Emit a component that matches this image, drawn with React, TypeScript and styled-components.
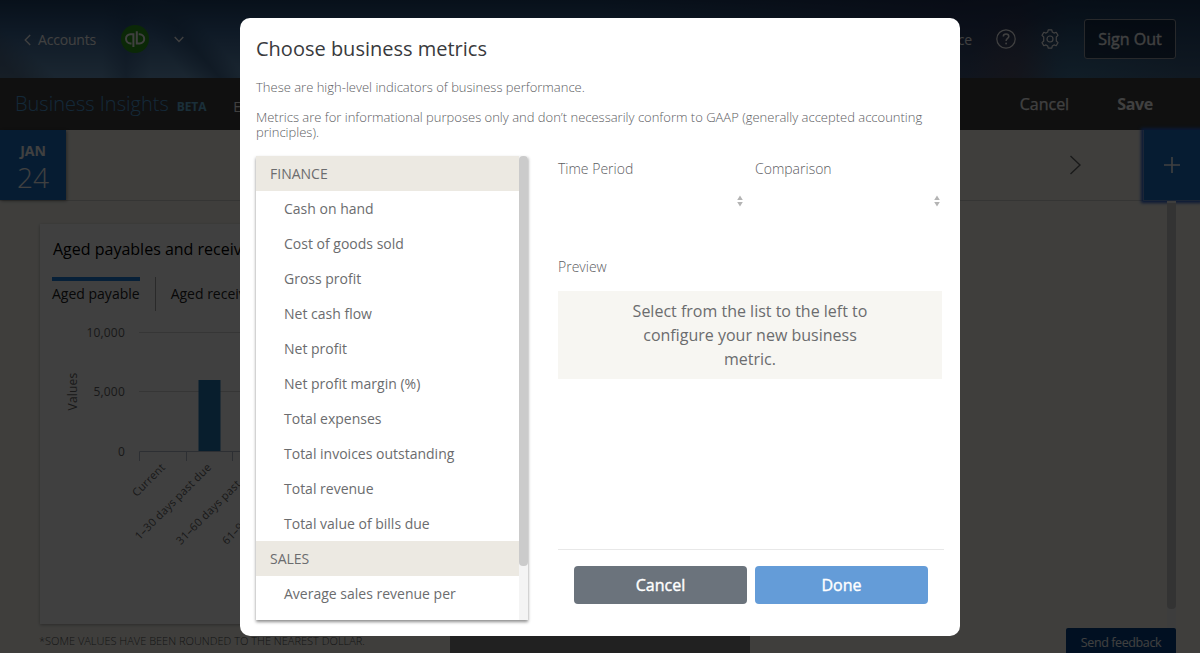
import React from 'react';
import styled, { createGlobalStyle } from 'styled-components';

const GlobalStyle = createGlobalStyle`
  * { box-sizing: border-box; }
  html, body { margin: 0; padding: 0; overflow: hidden; }
  body {
    font-family: 'Open Sans', 'Noto Sans', sans-serif;
    color: #6b6c6e;
    background: #f9f7f0;
  }
  button { font-family: inherit; cursor: pointer; }
  p, h1, h2, ul { margin: 0; padding: 0; }
`;

/* ---------- Page ---------- */

const Page = styled.div`
  width: 1200px;
  height: 653px;
  overflow: hidden;
  display: flex;
  flex-direction: column;
`;

const TopBar = styled.header`
  height: 78px;
  flex: none;
  display: flex;
  align-items: center;
  justify-content: space-between;
  padding: 0 24px;
  color: #fff;
  background:
    linear-gradient(42deg, rgba(70, 88, 110, 0.5) 1.5%, transparent 4.5%),
    linear-gradient(50deg, transparent 14.8%, rgba(40, 76, 116, 0.55) 17.4%, transparent 19.5%),
    linear-gradient(90deg, transparent 8.5%, rgba(30, 66, 110, 0.35) 10.5%, transparent 12.5%),
    radial-gradient(46px 70px at 1012px 78px, rgba(120, 70, 75, 0.35), transparent),
    radial-gradient(110px 60px at 1075px 78px, rgba(70, 140, 180, 0.4), transparent),
    linear-gradient(90deg, transparent 50%, rgba(36, 40, 74, 0.6) 80%, rgba(40, 48, 80, 0.7) 85%, rgba(24, 52, 82, 0.5) 89%, rgba(24, 48, 78, 0.5) 100%),
    linear-gradient(180deg, #20426a 0%, #3c6898 42%, #6c9ac4 100%);
`;

const Cluster = styled.div<{ $gap: number }>`
  display: flex;
  align-items: center;
  gap: ${(p) => p.$gap}px;
`;

const NavLink = styled.a`
  display: flex;
  align-items: center;
  gap: 7px;
  font-size: 14px;
  line-height: 20px;
  letter-spacing: -0.2px;
  padding-top: 1px;
`;

const SignOut = styled.button`
  width: 92px;
  height: 40px;
  padding: 0 0 1px;
  color: #fff;
  font-size: 16px;
  font-weight: 500;
  -webkit-text-stroke: 0.35px currentColor;
  background: rgba(16, 32, 56, 0.65);
  border: 1px solid #a0a4ac;
  border-radius: 3px;
`;

const ToolBar = styled.div`
  height: 52px;
  flex: none;
  display: flex;
  align-items: center;
  padding: 0 47px 0 15px;
  background: #404040;
  color: #fff;
`;

const ProductName = styled.h1`
  font-size: 20px;
  font-weight: 300;
  line-height: 28px;
  color: #50a4e0;
`;

const Beta = styled.span`
  margin-left: 8px;
  padding-top: 5px;
  font-size: 12px;
  font-weight: 700;
  letter-spacing: -0.1px;
  color: #68bce4;
`;

const MenuItem = styled.span`
  margin-left: 27px;
  padding-top: 5px;
  font-size: 14px;
  white-space: nowrap;
`;

const ToolActions = styled.div`
  margin-left: auto;
  display: flex;
  gap: 48px;
  font-size: 16px;
  font-weight: 500;
  -webkit-text-stroke: 0.25px currentColor;
`;

const Strong = styled.span`
  font-weight: 700;
  letter-spacing: -0.3px;
  -webkit-text-stroke: 0;
`;

const MetricStrip = styled.div`
  height: 71px;
  flex: none;
  display: flex;
  justify-content: space-between;
  border-bottom: 1px solid #d4d3cd;
`;

const DateTile = styled.div`
  width: 66px;
  height: 70px;
  padding-top: 11px;
  text-align: center;
  color: #fff;
  background: #1870c8;
  box-shadow: 1px 1px 3px rgba(0, 0, 0, 0.4);
`;

const Month = styled.div`
  font-size: 14px;
  font-weight: 700;
  line-height: 20px;
`;

const Day = styled.div`
  font-size: 28px;
  font-weight: 300;
  line-height: 32px;
`;

const StripEnd = styled.div`
  display: flex;
  align-items: center;
  gap: 61px;
`;

const AddTile = styled.div`
  width: 57px;
  height: 71px;
  display: flex;
  align-items: center;
  justify-content: center;
  background: #1870c8;
  border-left: 1px solid #6d96d8;
  border-bottom: 1px solid #6d96d8;
  box-shadow: 0 0 3px 2px #2860d0;
`;

const Content = styled.main`
  flex: 1;
  min-height: 0;
  display: flex;
  justify-content: space-between;
  padding: 0 24px 0 40px;
`;

const CardColumn = styled.div`
  width: 410px;
  padding-top: 23px;
`;

const Card = styled.section`
  height: 400px;
  padding: 14px 12px;
  background: #fff;
  box-shadow: 0 1px 3px rgba(0, 0, 0, 0.3);
`;

const CardTitle = styled.h2`
  font-size: 16px;
  font-weight: 400;
  line-height: 22px;
  padding-left: 1px;
  color: #000;
`;

const Tabs = styled.div`
  display: flex;
  margin-top: 17px;
`;

const Tab = styled.div<{ $active?: boolean }>`
  height: 34px;
  padding-top: 3px;
  border-top: 4px solid ${(p) => (p.$active ? '#1c80e0' : 'transparent')};
  font-size: 14px;
  line-height: 19px;
  color: #222;
`;

const TabDivider = styled.div`
  width: 1px;
  height: 34px;
  margin: 0 15px;
  background: #a8a8a8;
`;

const ChartSvg = styled.svg`
  display: block;
  margin-left: -12px;
  font-size: 12px;
  letter-spacing: 0.2px;
`;

const Categories = styled.g`
  font-size: 11px;
  letter-spacing: 0.25px;
`;

const RoundingNote = styled.p`
  margin: 9px 0 0 -1px;
  font-size: 11px;
  line-height: 16px;
  font-weight: 300;
  white-space: nowrap;
  color: #555;
`;

const DockedPanel = styled.div`
  align-self: flex-end;
  width: 300px;
  height: 20px;
  margin-right: auto;
  background: #848484;
`;

const SideRail = styled.div`
  width: 110px;
  display: flex;
  flex-direction: column;
  justify-content: space-between;
`;

const PageTrack = styled.div`
  align-self: flex-end;
  width: 9px;
  height: 427px;
  padding-top: 2px;
  background: #f4f4f4;
`;

const PageThumb = styled.div`
  height: 406px;
  border-radius: 0 0 4px 4px;
  background: #cacaca;
`;

const Feedback = styled.button`
  height: 25px;
  flex: none;
  padding: 3px 0 0;
  border: 0;
  border-radius: 2px 2px 0 0;
  background: #064288;
  color: #fff;
  font-size: 12.5px;
  letter-spacing: -0.4px;
`;

/* ---------- Dialog ---------- */

const Overlay = styled.div`
  position: fixed;
  inset: 0;
  display: flex;
  justify-content: center;
  align-items: flex-start;
  padding-top: 18px;
  background: rgba(0, 0, 0, 0.75);
`;

const Dialog = styled.div`
  width: 720px;
  height: 618px;
  padding: 17px 16px 16px;
  display: flex;
  flex-direction: column;
  background: #fff;
  border-radius: 10px;
`;

const DialogTitle = styled.h2`
  font-size: 20px;
  line-height: 27px;
  font-weight: 400;
  color: #393a3d;
`;

const Intro = styled.p<{ $top: number }>`
  margin-top: ${(p) => p.$top}px;
  font-size: 13px;
  line-height: 15px;
  font-weight: 300;
  color: #5c5d5f;
`;

const DialogBody = styled.div`
  display: flex;
  gap: 30px;
  margin-top: 16px;
`;

const ListPane = styled.div`
  width: 272px;
  height: 464px;
  display: flex;
  overflow: hidden;
  box-shadow: 0 2px 3px rgba(0, 0, 0, 0.45);
`;

const List = styled.ul`
  flex: 1;
  list-style: none;
`;

const GroupRow = styled.li`
  height: 35px;
  padding-left: 14px;
  font-size: 14px;
  line-height: 35px;
  background: #ece9e2;
`;

const MetricRow = styled.li`
  height: 35px;
  padding-left: 28px;
  font-size: 14px;
  line-height: 35px;
  white-space: nowrap;
`;

const ListTrack = styled.div`
  width: 9px;
  background: #f4f4f4;
`;

const ListThumb = styled.div`
  height: 410px;
  border-radius: 4px;
  background: #cbcbcb;
`;

const Settings = styled.div`
  width: 386px;
  display: flex;
  flex-direction: column;
`;

const Fields = styled.div`
  display: grid;
  grid-template-columns: 197px 189px;
  height: 98px;
`;

const Label = styled.div`
  font-size: 14px;
  font-weight: 300;
  line-height: 20px;
  padding-top: 3px;
  color: #5c5d5f;
`;

const Picker = styled.div`
  width: 189px;
  height: 40px;
  margin-top: 2px;
  padding-right: 4px;
  display: flex;
  align-items: center;
  justify-content: flex-end;
`;

const Preview = styled.div`
  width: 384px;
  height: 88px;
  margin-top: 14px;
  padding: 8px 64px;
  text-align: center;
  font-size: 16px;
  line-height: 24px;
  background: #f7f6f2;
`;

const Actions = styled.div`
  display: flex;
  gap: 8px;
  margin-top: auto;
  height: 71px;
  padding: 16px 16px 0;
  border-top: 1px solid #e8e8e8;
`;

const ActionButton = styled.button<{ $color: string }>`
  width: 173px;
  height: 38px;
  padding: 0;
  border: 0;
  border-radius: 4px;
  font-size: 16px;
  font-weight: 500;
  -webkit-text-stroke: 0.4px currentColor;
  color: #fff;
  background: ${(p) => p.$color};
`;

const FINANCE = [
  'Cash on hand',
  'Cost of goods sold',
  'Gross profit',
  'Net cash flow',
  'Net profit',
  'Net profit margin (%)',
  'Total expenses',
  'Total invoices outstanding',
  'Total revenue',
  'Total value of bills due',
];

const SALES = ['Average sales revenue per'];

function SortArrows() {
  return (
    <svg width="6" height="12" viewBox="0 0 6 12" fill="#b4b4b4">
      <path d="M3 .5 5.8 5H.2zM3 11.5.2 7h5.6z" />
    </svg>
  );
}

function Logo() {
  return (
    <svg width="28" height="28" viewBox="0 0 28 28" fill="none">
      <circle cx="14" cy="14" r="14" fill="#2ca01c" />
      <g stroke="#fff" strokeWidth="2">
        <path d="M12.4 22V9.2H9.6a4.6 4.6 0 0 0 0 9.2h.9" />
        <path d="M15.8 6.3v12.2h2.8a4.6 4.6 0 0 0 0-9.2h-.9" />
      </g>
    </svg>
  );
}

function HelpIcon() {
  return (
    <svg width="20" height="20" viewBox="0 0 20 20" fill="none" stroke="#fff" strokeWidth="1.2">
      <circle cx="10" cy="10" r="9.2" />
      <path d="M7.3 7.6c0-1.6 1.2-2.5 2.8-2.5s2.7 1 2.7 2.4c0 1.9-2.7 2-2.7 4.4" strokeWidth="1.5" />
      <circle cx="10.1" cy="14.5" r=".9" fill="#fff" stroke="none" />
    </svg>
  );
}

function GearIcon() {
  return (
    <svg width="20" height="20" viewBox="0 0 20 20" fill="none" stroke="#fff" strokeWidth="1.2" strokeLinejoin="round">
      <circle cx="10" cy="10" r="3" />
      <path d="M8.2.8h3.6l.5 2.3 1.7 1 2.2-.8 1.8 3.1L16.300 8v4l1.700 1.600-1.800 3.100-2.200-.8-1.700 1-.5 2.300H8.200l-.5-2.300-1.700-1-2.200.8L2 13.600 3.700 12V8L2 6.400l1.800-3.100 2.200.8 1.700-1z" />
    </svg>
  );
}

function AgingChart() {
  return (
    <ChartSvg width="300" height="250" viewBox="40 311 300 250" fill="#666">
      <path d="M139 332.5H340M139 391.5H340" stroke="#d8d8d8" />
      <path d="M139.5 461V451.5H240M186.5 451v10M232.5 451v10" fill="none" stroke="#b4bccb" />
      <rect x="198.5" y="380" width="22" height="71" fill="#2378b4" />
      <g textAnchor="end">
        <text x="125" y="337">10,000</text>
        <text x="125" y="396">5,000</text>
        <text x="125" y="456">0</text>
      </g>
      <Categories textAnchor="end">
        <text transform="translate(166 468) rotate(-45)">Current</text>
        <text transform="translate(212 468) rotate(-45)">1–30 days past due</text>
        <text transform="translate(258 468) rotate(-45)">31–60 days past due</text>
        <text transform="translate(304 468) rotate(-45)">61–90 days past due</text>
      </Categories>
      <text textAnchor="middle" transform="translate(77 391.5) rotate(-90)">Values</text>
    </ChartSvg>
  );
}

function MetricsDialog() {
  return (
    <Overlay>
      <Dialog role="dialog" aria-modal="true">
        <DialogTitle>Choose business metrics</DialogTitle>
        <Intro $top={18}>These are high-level indicators of business performance.</Intro>
        <Intro $top={15}>
          Metrics are for informational purposes only and don’t necessarily conform to GAAP (generally accepted
          accounting principles).
        </Intro>
        <DialogBody>
          <ListPane>
            <List>
              <GroupRow>FINANCE</GroupRow>
              {FINANCE.map((name) => (
                <MetricRow key={name}>{name}</MetricRow>
              ))}
              <GroupRow>SALES</GroupRow>
              {SALES.map((name) => (
                <MetricRow key={name}>{name}</MetricRow>
              ))}
            </List>
            <ListTrack>
              <ListThumb />
            </ListTrack>
          </ListPane>
          <Settings>
            <Fields>
              {['Time Period', 'Comparison'].map((name) => (
                <div key={name}>
                  <Label>{name}</Label>
                  <Picker>
                    <SortArrows />
                  </Picker>
                </div>
              ))}
            </Fields>
            <Label>Preview</Label>
            <Preview>Select from the list to the left to configure your new business metric.</Preview>
            <Actions>
              <ActionButton $color="#6b737c">Cancel</ActionButton>
              <ActionButton $color="#649cd8">Done</ActionButton>
            </Actions>
          </Settings>
        </DialogBody>
      </Dialog>
    </Overlay>
  );
}

export default function App() {
  return (
    <>
      <GlobalStyle />
      <Page>
        <TopBar>
          <Cluster $gap={25}>
            <NavLink>
              <svg width="7" height="12" viewBox="0 0 7 12" fill="none" stroke="#fff" strokeWidth="1.3">
                <path d="M6.2 1 1.2 6l5 5" />
              </svg>
              Accounts
            </NavLink>
            <Logo />
            <svg width="10" height="7" viewBox="0 0 10 7" fill="none" stroke="#fff" strokeWidth="1.3">
              <path d="M.7 1 5 5.5 9.3 1" />
            </svg>
          </Cluster>
          <Cluster $gap={24}>
            <NavLink>Find assistance</NavLink>
            <HelpIcon />
            <GearIcon />
            <SignOut>Sign Out</SignOut>
          </Cluster>
        </TopBar>
        <ToolBar>
          <ProductName>Business Insights</ProductName>
          <Beta>BETA</Beta>
          <MenuItem>Edit</MenuItem>
          <ToolActions>
            <span>Cancel</span>
            <Strong>Save</Strong>
          </ToolActions>
        </ToolBar>
        <MetricStrip>
          <DateTile>
            <Month>JAN</Month>
            <Day>24</Day>
          </DateTile>
          <StripEnd>
            <svg width="13" height="20" viewBox="0 0 13 20" fill="none" stroke="#666" strokeWidth="1.4">
              <path d="M1.5 1 11 10l-9.5 9" />
            </svg>
            <AddTile>
              <svg width="16" height="16" viewBox="0 0 16 16" stroke="#fff" strokeWidth="1.6">
                <path d="M0 8h16M8 0v16" />
              </svg>
            </AddTile>
          </StripEnd>
        </MetricStrip>
        <Content>
          <CardColumn>
            <Card>
              <CardTitle>Aged payables and receivables</CardTitle>
              <Tabs>
                <Tab $active>Aged payable</Tab>
                <TabDivider />
                <Tab>Aged receivable</Tab>
              </Tabs>
              <AgingChart />
            </Card>
            <RoundingNote>*SOME VALUES HAVE BEEN ROUNDED TO THE NEAREST DOLLAR.</RoundingNote>
          </CardColumn>
          <DockedPanel />
          <SideRail>
            <PageTrack>
              <PageThumb />
            </PageTrack>
            <Feedback>Send feedback</Feedback>
          </SideRail>
        </Content>
      </Page>
      <MetricsDialog />
    </>
  );
}
